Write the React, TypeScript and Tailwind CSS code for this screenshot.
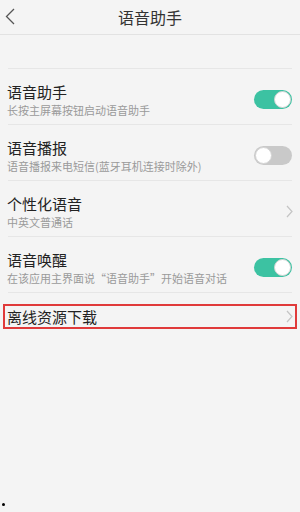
import React, { useState } from "react";

const FONT = { fontFamily: '"Noto Sans CJK SC", "Noto Sans", sans-serif' };

function Toggle({ on, onClick }: { on: boolean; onClick: () => void }) {
  return (
    <button
      onClick={onClick}
      className={`relative h-[19px] w-[38px] shrink-0 rounded-full ${
        on ? "bg-[#3cc2a2]" : "bg-[#c9c9c9]"
      }`}
    >
      <span
        className={`absolute top-[1px] h-[17px] w-[17px] rounded-full border border-[#d4d4d4] bg-white ${
          on ? "right-[1px]" : "left-[1px]"
        }`}
      />
    </button>
  );
}

function Chevron() {
  return (
    <svg width="7" height="13" viewBox="0 0 7 13" className="shrink-0">
      <path d="M1 1l5 5.5-5 5.5" fill="none" stroke="#c4c4c4" strokeWidth="1.2" />
    </svg>
  );
}

export default function App() {
  const [toggles, setToggles] = useState({ assistant: true, broadcast: false, wake: true });

  const rows = [
    { key: "assistant", title: "语音助手", sub: "长按主屏幕按钮启动语音助手", type: "toggle" },
    { key: "broadcast", title: "语音播报", sub: "语音播报来电短信(蓝牙耳机连接时除外)", type: "toggle" },
    { key: "voice", title: "个性化语音", sub: "中英文普通话", type: "link" },
    { key: "wake", title: "语音唤醒", sub: "在该应用主界面说“语音助手”开始语音对话", type: "toggle" },
  ];

  return (
    <div className="relative h-[512px] w-[300px] overflow-hidden bg-[#f4f4f4]" style={FONT}>
      {/* Header */}
      <div className="relative flex h-[35px] items-center justify-center border-b border-[#e2e2e2]">
        <svg width="10" height="17" viewBox="0 0 10 17" className="absolute left-[5px] top-[8px]">
          <path d="M9 1L1.5 8.5 9 16" fill="none" stroke="#555" strokeWidth="1.3" />
        </svg>
        <span className="text-[16px] leading-[20px] text-[#333]">语音助手</span>
      </div>

      <div className="h-[33px]" />

      {/* Settings list */}
      <div className="mx-[8px] border-t border-[#e6e6e6]">
        {rows.map((r) => (
          <div key={r.key} className="flex h-[56px] items-start justify-between border-b border-[#e6e6e6] pt-[13px]">
            <div className="-ml-[1px] flex flex-col">
              <span className="text-[15px] leading-[20px] text-[#222]">{r.title}</span>
              <span className="mt-[1px] text-[11px] leading-[14px] text-[#9a9a9a]">{r.sub}</span>
            </div>
            <div className="flex h-[35px] items-center">
              {r.type === "toggle" ? (
                <Toggle
                  on={toggles[r.key as keyof typeof toggles]}
                  onClick={() =>
                    setToggles((t) => ({ ...t, [r.key]: !t[r.key as keyof typeof t] }))
                  }
                />
              ) : (
                <div className="-mr-[1px]">
                  <Chevron />
                </div>
              )}
            </div>
          </div>
        ))}
      </div>

      {/* Offline resources, highlighted */}
      <div className="mx-[3px] mt-[11px] flex h-[25px] w-[294px] items-center justify-between border-2 border-[#e03a3a] pl-[2px] pr-[2px]">
        <span className="text-[15px] leading-[20px] text-[#222]">离线资源下载</span>
        <Chevron />
      </div>

      <span className="absolute bottom-[6px] left-[2px] h-[3px] w-[3px] rounded-full bg-black" />
    </div>
  );
}
